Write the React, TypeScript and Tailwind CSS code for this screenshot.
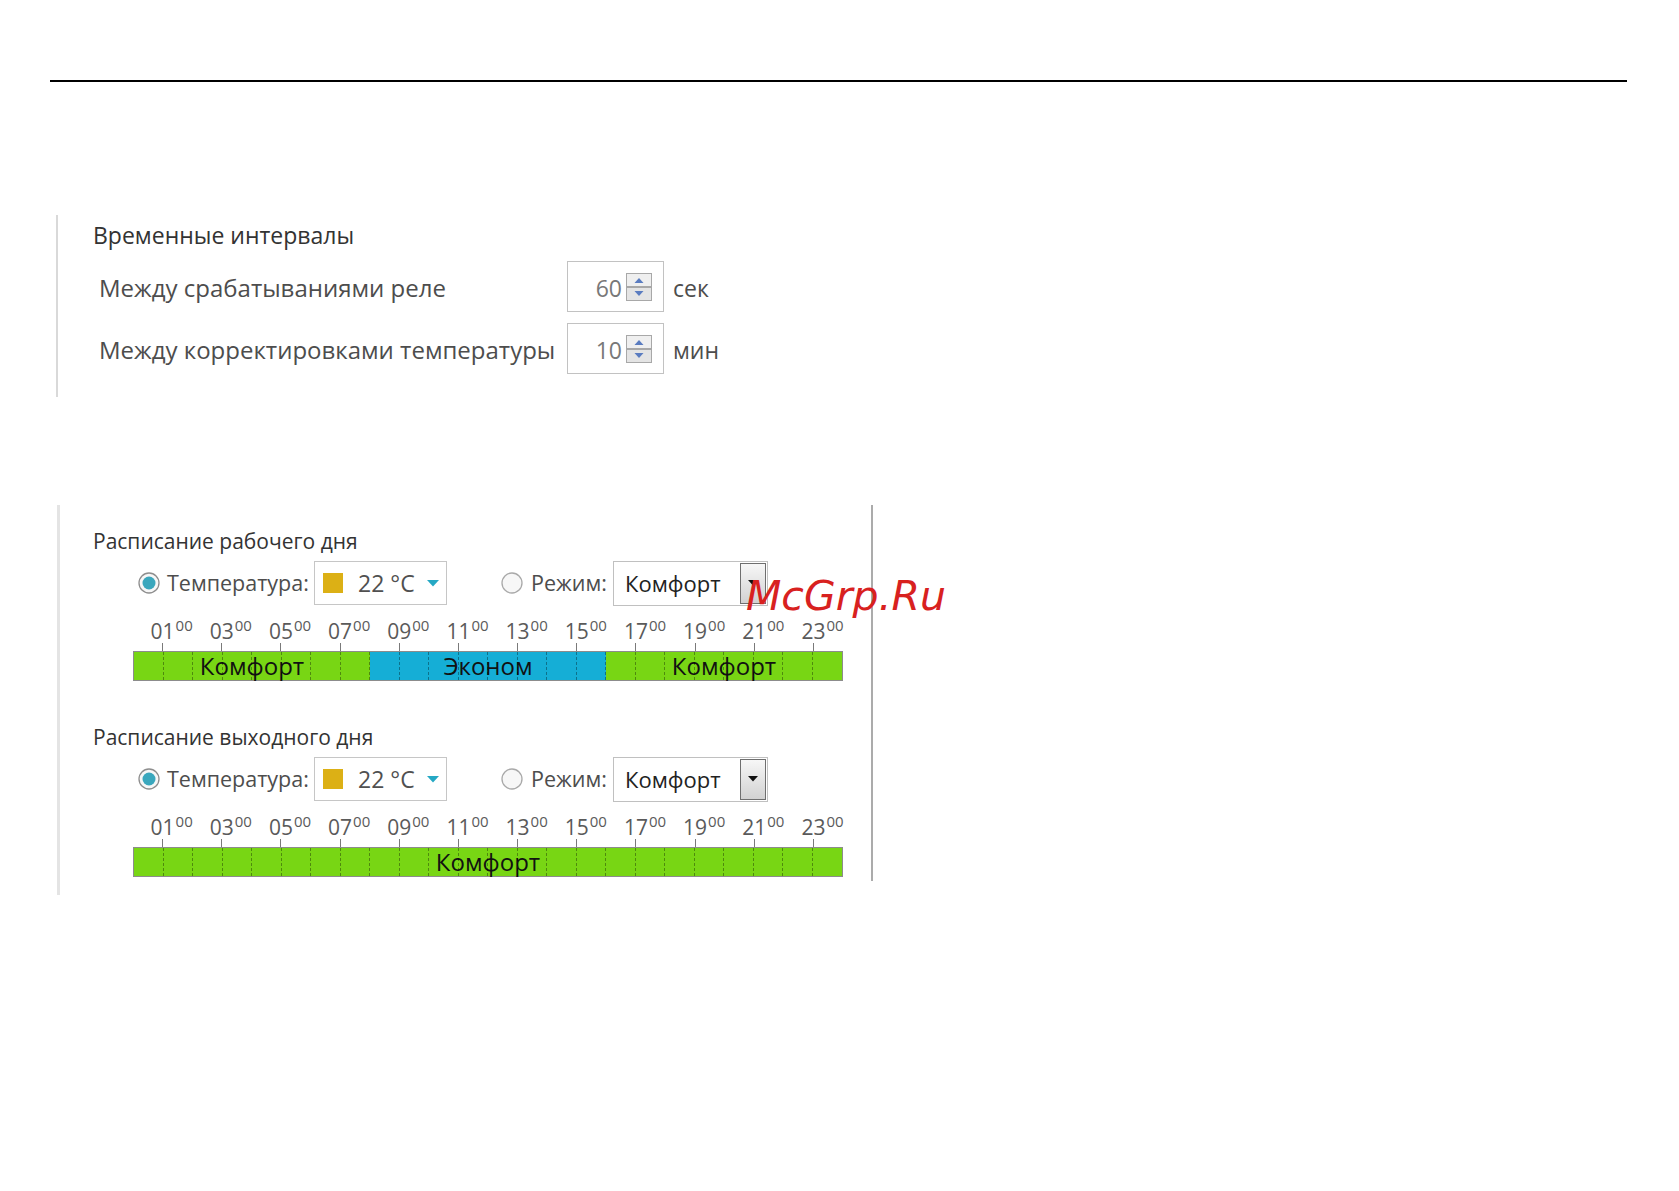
import React from 'react'

type Segment = { mode: string; hours: number; color: string }

const WORKDAY: Segment[] = [
  { mode: 'Комфорт', hours: 8, color: 'bg-[#78d614]' },
  { mode: 'Эконом', hours: 8, color: 'bg-[#15aed6]' },
  { mode: 'Комфорт', hours: 8, color: 'bg-[#78d614]' },
]

const WEEKEND: Segment[] = [{ mode: 'Комфорт', hours: 24, color: 'bg-[#78d614]' }]

const ODD_HOURS = ['01', '03', '05', '07', '09', '11', '13', '15', '17', '19', '21', '23']

function Spinner() {
  return (
    <svg width="26" height="28" viewBox="0 0 26 28" className="shrink-0">
      <rect x="0.5" y="0.5" width="25" height="13" fill="#efefef" stroke="#a8a8a8" />
      <rect x="0.5" y="14.5" width="25" height="13" fill="#e4e4e4" stroke="#a8a8a8" />
      <path d="M8.5 10 L13 5 L17.5 10 Z" fill="#5a7cc0" />
      <path d="M8.5 18 L13 23 L17.5 18 Z" fill="#5a7cc0" />
    </svg>
  )
}

function IntervalRow({ label, value, unit }: { label: string; value: number; unit: string }) {
  return (
    <div className="flex items-center">
      <span className="w-[474px] pl-[6px] pt-[2px] text-[24px] leading-[30px] text-[#4d4d4d]">{label}</span>
      <div className="flex h-[51px] w-[97px] items-center justify-end gap-[4px] border border-[#c2c2c2] pr-[11px]">
        <span className="pt-[3px] text-[23px] leading-[30px] text-[#787878]">{value}</span>
        <Spinner />
      </div>
      <span className="ml-[9px] pt-[2px] text-[23px] leading-[30px] text-[#4d4d4d]">{unit}</span>
    </div>
  )
}

function Radio({ checked }: { checked?: boolean }) {
  return (
    <svg width="22" height="22" viewBox="0 0 22 22" className="shrink-0">
      <circle cx="11" cy="11" r="10" fill="#f7f7f7" stroke={checked ? '#8e8e8e' : '#a9a9a9'} strokeWidth="1.3" />
      {checked && <circle cx="11" cy="11" r="6.5" fill="#3aa7bd" />}
    </svg>
  )
}

function ScheduleBlock({ title, segments }: { title: string; segments: Segment[] }) {
  return (
    <div>
      <h3 className="text-[21px] leading-[30px] text-[#333]">{title}</h3>
      <div className="mt-[5px] flex h-[44px] items-center pl-[45px]">
        <Radio checked />
        <span className="w-[154px] pl-[7px] text-[21.5px] leading-none text-[#4d4d4d]">Температура:</span>
        <div className="flex h-[44px] w-[133px] items-center border border-[#c6c6c6] pl-[8px]">
          <div className="h-[20px] w-[20px] bg-[#dcb015]" />
          <span className="ml-[15px] text-[23px] leading-none text-[#505050]">22 °C</span>
          <svg width="12" height="7" viewBox="0 0 12 7" className="ml-[12px]">
            <path d="M0 0 H12 L6 6.5 Z" fill="#25a8c4" />
          </svg>
        </div>
        <div className="ml-[54px]">
          <Radio />
        </div>
        <span className="w-[90px] pl-[8px] text-[21.5px] leading-none text-[#4d4d4d]">Режим:</span>
        <div className="flex h-[45px] w-[155px] items-stretch border border-[#c0c0c0] p-px">
          <span className="flex flex-1 items-center pl-[10px] text-[22px] leading-none text-[#222]">Комфорт</span>
          <div className="flex w-[26px] items-center justify-center border border-[#6f6f6f] bg-gradient-to-b from-[#f7f7f7] to-[#d2d2d2]">
            <svg width="10" height="6" viewBox="0 0 10 6">
              <path d="M0 0 H10 L5 5.5 Z" fill="#111" />
            </svg>
          </div>
        </div>
      </div>

      {/* hour scale */}
      <div className="ml-[40px] w-[710px]">
        <div className="mt-[13px] grid h-[25px] grid-cols-12">
          {ODD_HOURS.map(h => (
            <div key={h} className="flex justify-center">
              <span className="relative block pt-[1px] text-[21px] leading-[25px] text-[#5a5a5a]">
                {h}
                <span className="absolute left-full top-0 ml-px text-[15px] leading-[15px]">00</span>
              </span>
            </div>
          ))}
        </div>
        <div className="grid h-[8px] grid-cols-12">
          {ODD_HOURS.map(h => (
            <div key={h} className="flex justify-center">
              <div className="h-full w-px bg-[#7a7a7a]" />
            </div>
          ))}
        </div>
        <div className="relative flex h-[30px] border border-[#8c8c8c]">
          {segments.map((s, i) => (
            <div
              key={i}
              className={`flex items-center justify-center text-[24px] leading-none text-[#111] ${s.color}`}
              style={{ flexGrow: s.hours, flexBasis: 0 }}
            >
              {s.mode}
            </div>
          ))}
          <div className="pointer-events-none absolute inset-0 grid grid-cols-[repeat(24,minmax(0,1fr))]">
            {Array.from({ length: 24 }, (_, i) => (
              <div key={i} className={i < 23 ? 'border-r border-dashed border-black/35' : ''} />
            ))}
          </div>
        </div>
      </div>
    </div>
  )
}

export default function App() {
  return (
    <div className="relative min-h-[1191px] bg-white font-['Open_Sans',sans-serif]">
      <div className="ml-[50px] mr-[52px] pt-[80px]">
        <div className="h-[2px] bg-black" />
      </div>

      {/* Временные интервалы */}
      <div className="ml-[56px] mt-[133px] h-[182px] w-[700px] border-l-2 border-[#d9d9d9] pl-[35px] pt-[5px]">
        <h2 className="text-[23px] leading-[30px] text-[#333]">Временные интервалы</h2>
        <div className="mt-[11px] flex flex-col gap-[11px]">
          <IntervalRow label="Между срабатываниями реле" value={60} unit="сек" />
          <IntervalRow label="Между корректировками температуры" value={10} unit="мин" />
        </div>
      </div>

      {/* расписания */}
      <div className="ml-[57px] mt-[108px] flex">
        <div className="h-[390px] w-[814px] border-l-[3px] border-[#e4e4e4] pl-[33px] pt-[21px]">
          <ScheduleBlock title="Расписание рабочего дня" segments={WORKDAY} />
          <div className="mt-[41px]">
            <ScheduleBlock title="Расписание выходного дня" segments={WEEKEND} />
          </div>
        </div>
        <div className="h-[376px] w-[2px] bg-[#ababab]" />
      </div>

      <span className="absolute left-[746px] top-[576px] font-['DejaVu_Sans',sans-serif] text-[41px] italic leading-[40px] text-[#d8211f]">
        McGrp.Ru
      </span>
    </div>
  )
}
